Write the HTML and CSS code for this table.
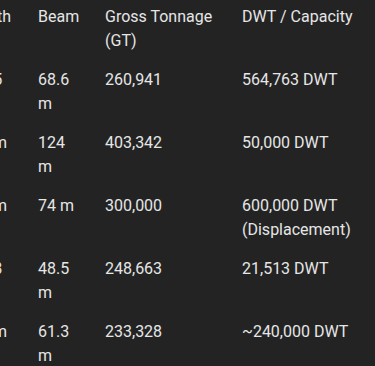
FILE: index.html
```html
<!DOCTYPE html>
<html>
<head>
<meta charset="utf-8">
<link rel="stylesheet" href="styles.css">
</head>
<body>
<div class="viewport">
  <table class="ships">
    <colgroup>
      <col class="c-len"><col class="c-beam"><col class="c-gt"><col class="c-dwt">
    </colgroup>
    <thead>
      <tr><th>Length</th><th>Beam</th><th>Gross Tonnage (GT)</th><th>DWT / Capacity</th></tr>
    </thead>
    <tbody>
      <tr><td>458.5 m</td><td>68.6 m</td><td>260,941</td><td>564,763 DWT</td></tr>
      <tr><td>382 m</td><td>124 m</td><td>403,342</td><td>50,000 DWT</td></tr>
      <tr><td>488 m</td><td>74 m</td><td>300,000</td><td>600,000 DWT (Displacement)</td></tr>
      <tr><td>364.8 m</td><td>48.5 m</td><td>248,663</td><td>21,513 DWT</td></tr>
      <tr><td>400 m</td><td>61.3 m</td><td>233,328</td><td>~240,000 DWT</td></tr>
    </tbody>
  </table>
</div>
</body>
</html>
```

FILE: styles.css
```css
html, body {
  margin: 0;
  padding: 0;
  background: #232323;
}
.viewport {
  width: 375px;
  height: 366px;
  overflow: hidden;
}
.ships {
  border-collapse: collapse;
  table-layout: fixed;
  width: 425px;
  margin-left: -50px;
  margin-top: -3px;
  font-family: Roboto, "Noto Sans", sans-serif;
  font-size: 16px;
  line-height: 23.5px;
  color: #e6e6e6;
}
.c-len { width: 76px; }
.c-beam { width: 67px; }
.c-gt { width: 137px; }
.c-dwt { width: 145px; }
.ships th, .ships td {
  text-align: left;
  vertical-align: top;
  font-weight: 400;
  padding: 8px 12px;
}
```
